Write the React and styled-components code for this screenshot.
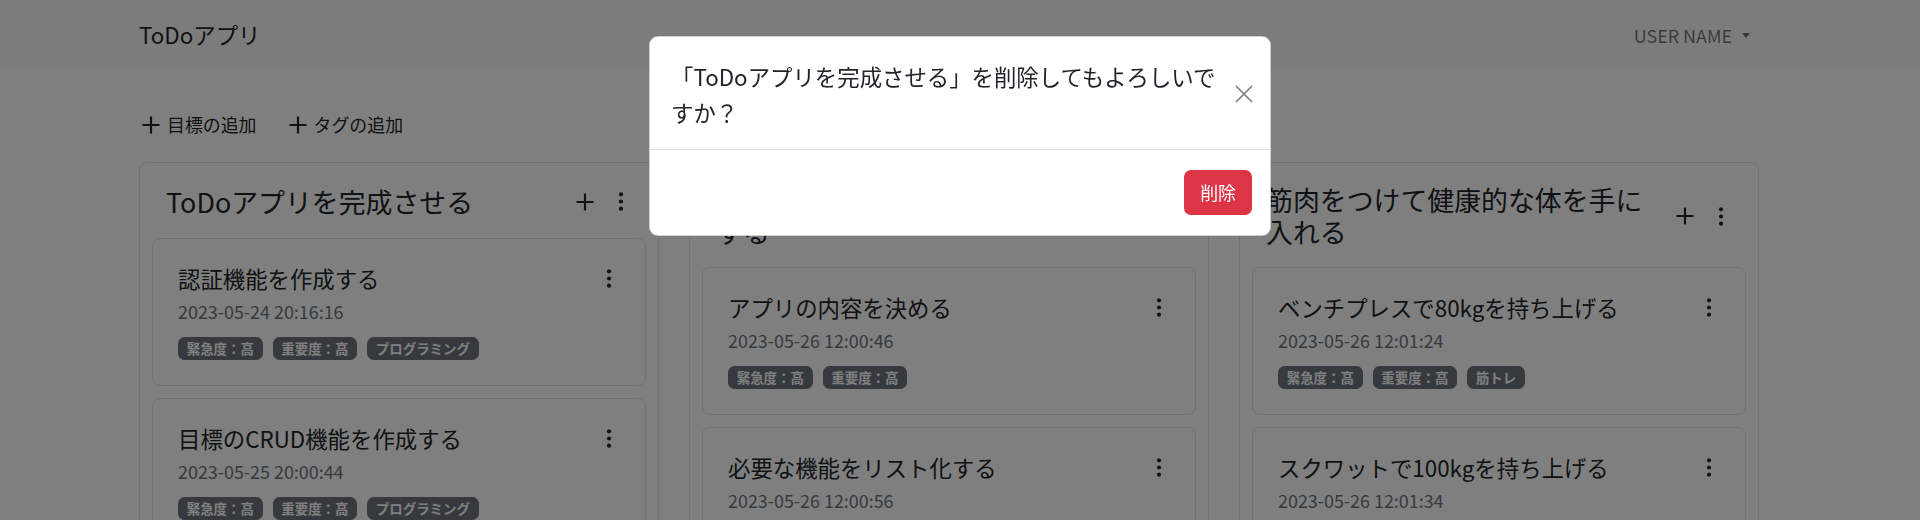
import React from 'react';
import styled, { createGlobalStyle } from 'styled-components';

const GlobalStyle = createGlobalStyle`
  *, *::before, *::after { box-sizing: border-box; }
  body {
    margin: 0;
    overflow: hidden;
    background: #fff;
    color: #212529;
    font-family: "Noto Sans CJK JP", "Noto Sans", sans-serif;
    font-size: 17.92px;
    line-height: 1.5;
  }
`;

const Navbar = styled.nav`
  height: 68px;
  background: #f8f9fa;
  padding: 0 161px 0 139px;
  display: flex;
  align-items: center;
  justify-content: space-between;
`;

const Brand = styled.a`
  font-size: 22.4px;
  line-height: 1.5;
  color: #212529;
  text-decoration: none;
  margin-top: 2px;
`;

const UserToggle = styled.button`
  display: flex;
  align-items: center;
  background: none;
  border: 0;
  padding: 0 9px;
  margin-top: 2px;
  font: inherit;
  color: rgba(0, 0, 0, 0.55);

  &::after {
    content: '';
    margin-left: 10px;
    border-top: 5px solid currentColor;
    border-left: 4.5px solid transparent;
    border-right: 4.5px solid transparent;
  }
`;

const Main = styled.main`
  padding: 0 161px 0 139px;
`;

const Actions = styled.div`
  display: flex;
  gap: 32px;
  margin: 43px 0 24px 3px;
`;

const ActionButton = styled.button`
  display: inline-flex;
  align-items: center;
  gap: 7px;
  background: none;
  border: 0;
  padding: 0;
  font: inherit;
  line-height: 27px;
  color: #212529;
`;

const Board = styled.div`
  display: grid;
  grid-template-columns: repeat(3, 520px);
  gap: 30px;
  align-items: start;
`;

const Column = styled.section`
  border: 1px solid #dee2e6;
  border-radius: 8px;
  padding: 21px 12px 12px;
  display: flex;
  flex-direction: column;
`;

const ColumnHeader = styled.div`
  display: flex;
  align-items: center;
  gap: 12px;
  padding: 0 14px;
  margin-bottom: 19px;
`;

const ColumnTitle = styled.h4`
  flex: 1;
  margin: 0;
  font-size: 26.88px;
  line-height: 32px;
  font-weight: 400;
`;

const IconGroup = styled.div`
  display: flex;
  align-items: center;
  gap: 15px;
`;

const IconButton = styled.button`
  display: flex;
  align-items: center;
  justify-content: center;
  width: ${(p) => p.$w || 22}px;
  height: 35px;
  padding: 0;
  background: none;
  border: 0;
  color: #212529;
`;

const CardList = styled.div`
  display: flex;
  flex-direction: column;
  gap: 12px;
`;

const Card = styled.article`
  border: 1px solid #dee2e6;
  border-radius: 8px;
  padding: 22px 25px 25px;
  background: #fff;
`;

const CardRow = styled.div`
  display: flex;
  align-items: center;
  justify-content: space-between;
  min-height: 35px;
`;

const CardTitle = styled.h5`
  margin: 0;
  font-size: 22.4px;
  line-height: 1.2;
  font-weight: 400;
`;

const DateText = styled.div`
  margin-top: 2px;
  line-height: 27px;
  color: #6c757d;
`;

const Tags = styled.div`
  display: flex;
  gap: 10px;
  margin-top: 12px;
`;

const Badge = styled.span`
  display: inline-block;
  padding: 4.7px 8.7px;
  font-size: 13.44px;
  line-height: 1;
  font-weight: 700;
  color: #fff;
  background: #6c757d;
  border-radius: 6.7px;
`;

const Backdrop = styled.div`
  position: fixed;
  inset: 0;
  background: rgba(0, 0, 0, 0.5);
  z-index: 10;
`;

const Dialog = styled.div`
  position: fixed;
  top: 36px;
  left: 50%;
  transform: translateX(-50%);
  width: 622px;
  background: #fff;
  border: 1px solid rgba(0, 0, 0, 0.175);
  border-radius: 9px;
  z-index: 11;
`;

const ModalHeader = styled.div`
  display: flex;
  align-items: center;
  gap: 14px;
  padding: 21px 17px 19px 21px;
  border-bottom: 1px solid #dee2e6;
`;

const ModalTitle = styled.h5`
  flex: 1;
  margin: 0;
  font-size: 22.4px;
  line-height: 36px;
  font-weight: 400;
`;

const CloseButton = styled.button`
  display: flex;
  width: 18px;
  height: 18px;
  padding: 0;
  background: none;
  border: 0;
  opacity: 0.5;
  color: #000;
`;

const ModalFooter = styled.div`
  display: flex;
  justify-content: flex-end;
  padding: 20px 18px 20px;
`;

const DangerButton = styled.button`
  background: #dc3545;
  color: #fff;
  border: 0;
  border-radius: 7px;
  padding: 9px 16px;
  font: inherit;
  line-height: 27px;
`;

const PlusIcon = () => (
  <svg width="18" height="18" viewBox="0 0 18 18" fill="none">
    <path d="M9 0.5V17.5M0.5 9H17.5" stroke="currentColor" strokeWidth="2.2" />
  </svg>
);

const KebabIcon = () => (
  <svg width="23" height="23" viewBox="0 0 16 16" fill="currentColor">
    <circle cx="8" cy="2.8" r="1.5" />
    <circle cx="8" cy="8" r="1.5" />
    <circle cx="8" cy="13.2" r="1.5" />
  </svg>
);

const CloseIcon = () => (
  <svg width="18" height="18" viewBox="0 0 18 18" fill="none">
    <path d="M1 1L17 17M17 1L1 17" stroke="currentColor" strokeWidth="1.7" />
  </svg>
);

const goals = [
  {
    id: 1,
    title: 'ToDoアプリを完成させる',
    todos: [
      { id: 1, title: '認証機能を作成する', date: '2023-05-24 20:16:16', tags: ['緊急度：高', '重要度：高', 'プログラミング'] },
      { id: 2, title: '目標のCRUD機能を作成する', date: '2023-05-25 20:00:44', tags: ['緊急度：高', '重要度：高', 'プログラミング'] },
    ],
  },
  {
    id: 2,
    title: '就活用のポートフォリオを作成する',
    todos: [
      { id: 3, title: 'アプリの内容を決める', date: '2023-05-26 12:00:46', tags: ['緊急度：高', '重要度：高'] },
      { id: 4, title: '必要な機能をリスト化する', date: '2023-05-26 12:00:56', tags: ['緊急度：高', '重要度：高'] },
    ],
  },
  {
    id: 3,
    title: '筋肉をつけて健康的な体を手に入れる',
    todos: [
      { id: 5, title: 'ベンチプレスで80kgを持ち上げる', date: '2023-05-26 12:01:24', tags: ['緊急度：高', '重要度：高', '筋トレ'] },
      { id: 6, title: 'スクワットで100kgを持ち上げる', date: '2023-05-26 12:01:34', tags: ['緊急度：高', '重要度：高', '筋トレ'] },
    ],
  },
];

export default function App() {
  return (
    <>
      <GlobalStyle />
      <Navbar>
        <Brand href="#">ToDoアプリ</Brand>
        <UserToggle>USER NAME</UserToggle>
      </Navbar>
      <Main>
        <Actions>
          <ActionButton><PlusIcon />目標の追加</ActionButton>
          <ActionButton><PlusIcon />タグの追加</ActionButton>
        </Actions>
        <Board>
          {goals.map((goal) => (
            <Column key={goal.id}>
              <ColumnHeader>
                <ColumnTitle>{goal.title}</ColumnTitle>
                <IconGroup>
                  <IconButton $w={20}><PlusIcon /></IconButton>
                  <IconButton><KebabIcon /></IconButton>
                </IconGroup>
              </ColumnHeader>
              <CardList>
                {goal.todos.map((todo) => (
                  <Card key={todo.id}>
                    <CardRow>
                      <CardTitle>{todo.title}</CardTitle>
                      <IconButton><KebabIcon /></IconButton>
                    </CardRow>
                    <DateText>{todo.date}</DateText>
                    <Tags>
                      {todo.tags.map((t) => (
                        <Badge key={t}>{t}</Badge>
                      ))}
                    </Tags>
                  </Card>
                ))}
              </CardList>
            </Column>
          ))}
        </Board>
      </Main>
      <Backdrop />
      <Dialog>
        <ModalHeader>
          <ModalTitle>「ToDoアプリを完成させる」を削除してもよろしいですか？</ModalTitle>
          <CloseButton><CloseIcon /></CloseButton>
        </ModalHeader>
        <ModalFooter>
          <DangerButton>削除</DangerButton>
        </ModalFooter>
      </Dialog>
    </>
  );
}
